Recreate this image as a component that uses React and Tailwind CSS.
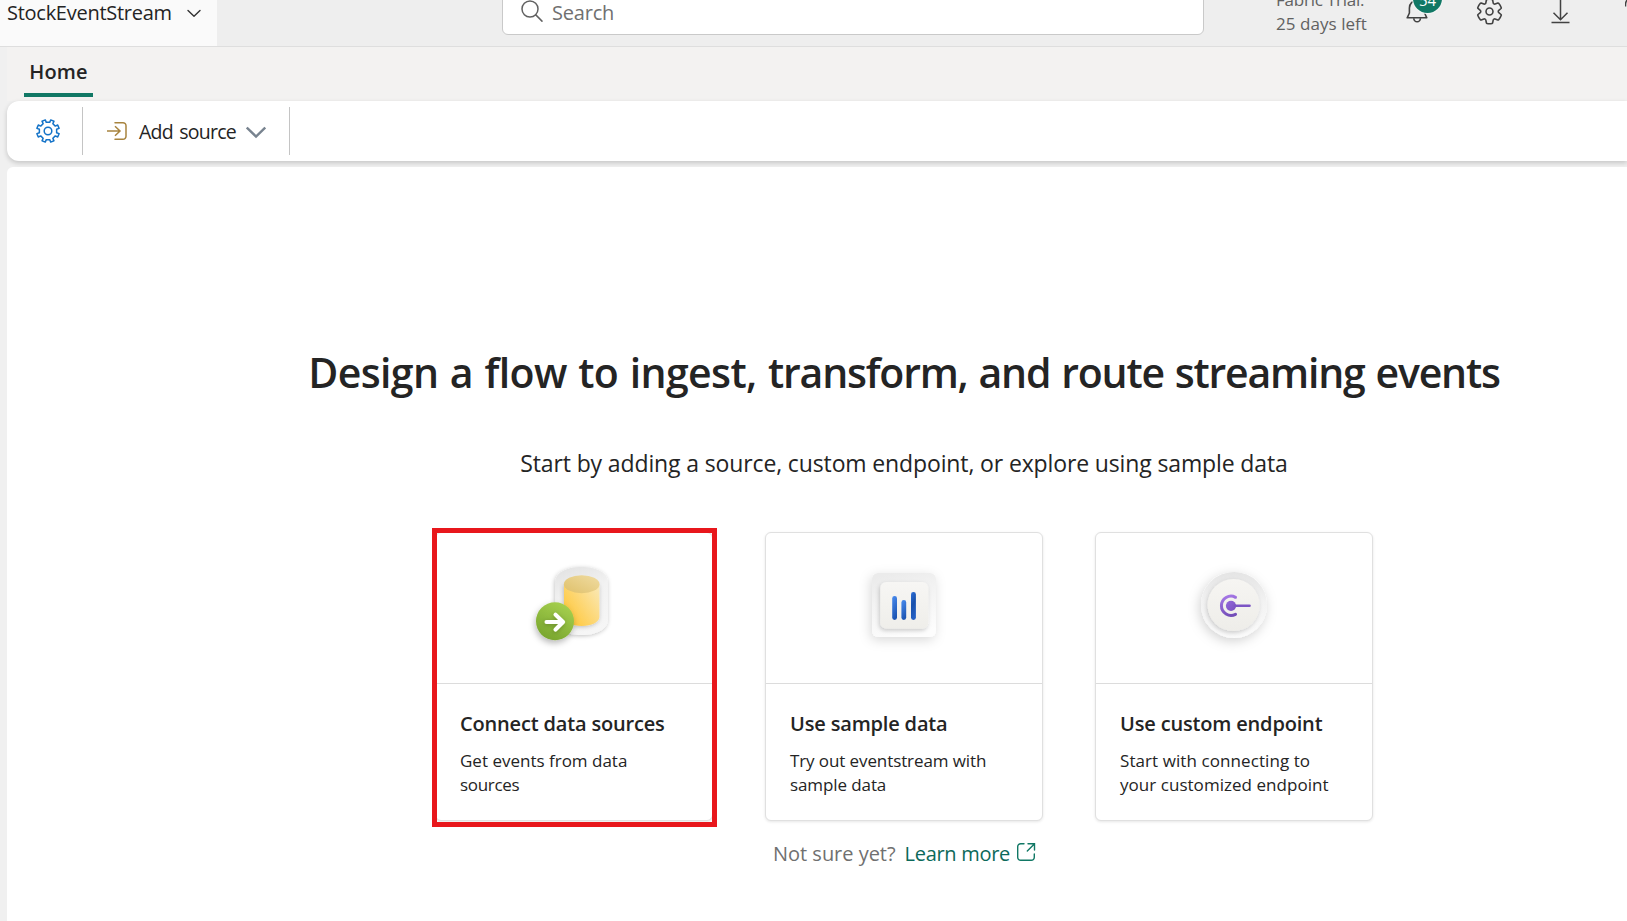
import React from "react";

const GEAR_SIX =
  "M1.91 7.38A8.5 8.5 0 0 1 3.7 4.3a.5.5 0 0 1 .54-.13l1.92.68a1 1 0 0 0 1.32-.76l.36-2a.5.5 0 0 1 .4-.4 8.53 8.53 0 0 1 3.55 0c.2.04.35.2.38.4l.37 2a1 1 0 0 0 1.32.76l1.92-.68a.5.5 0 0 1 .54.13 8.5 8.5 0 0 1 1.78 3.08c.06.2 0 .4-.15.54l-1.56 1.32a1 1 0 0 0 0 1.52l1.56 1.32a.5.5 0 0 1 .15.54 8.5 8.5 0 0 1-1.78 3.08.5.5 0 0 1-.54.13l-1.92-.68a1 1 0 0 0-1.32.76l-.37 2a.5.5 0 0 1-.38.4 8.53 8.53 0 0 1-3.56 0 .5.5 0 0 1-.39-.4l-.36-2a1 1 0 0 0-1.32-.76l-1.92.68a.5.5 0 0 1-.54-.13 8.5 8.5 0 0 1-1.78-3.08.5.5 0 0 1 .15-.54l1.56-1.32a1 1 0 0 0 0-1.52L2.06 7.92a.5.5 0 0 1-.15-.54Z";

function toothedPath(teeth, outer, inner, cx, cy) {
  const step = (Math.PI * 2) / teeth;
  const points = [];
  for (let i = 0; i < teeth; i++) {
    const a = -Math.PI / 2 + step / 2 + i * step;
    [
      [-0.25, inner],
      [-0.2, outer],
      [0.2, outer],
      [0.25, inner],
    ].forEach(([k, r]) => {
      points.push(`${(cx + r * Math.cos(a + k * step)).toFixed(2)} ${(cy + r * Math.sin(a + k * step)).toFixed(2)}`);
    });
  }
  return `M${points.join("L")}Z`;
}

function Header() {
  return (
    <header className="-mt-[22px] flex h-[69px] items-center border-b border-[#dedede] bg-[#eeeeee]">
      <div className="flex h-full w-[217px] shrink-0 items-center bg-[#fafafa] pl-[7px]">
        <span className="mt-px w-[164px] text-[20px] leading-[22px] tracking-[-0.27px] whitespace-nowrap text-[#242424]">
          StockEventStream
        </span>
        <svg className="mt-px ml-[15px] h-4 w-4" viewBox="0 0 16 16" fill="none" stroke="#333" strokeWidth="1.4">
          <path d="M2 5.4l6 5.800 6-5.800" strokeLinecap="round" strokeLinejoin="round" />
        </svg>
      </div>
      <div className="ml-[285px] flex h-[45px] w-[702px] shrink-0 items-center rounded-md border border-[#c9c9c9] bg-white pl-[18px]">
        <svg className="mb-[2px] h-6 w-6" viewBox="0 0 24 24" fill="none" stroke="#616161" strokeWidth="1.500">
          <circle cx="9" cy="10" r="8" />
          <path d="M14.800 15.900l6.200 6.200" strokeLinecap="round" />
        </svg>
        <span className="mt-px ml-[7px] text-[20px] leading-[22px] tracking-[-0.2px] text-[#707070]">Search</span>
      </div>
      <div className="ml-[72px] w-[94px] shrink-0 text-[17px] leading-[24px] whitespace-nowrap text-[#616161]">
        <div className="tracking-[-0.23px]">Fabric Trial:</div>
        <div className="tracking-[0.05px]">25 days left</div>
      </div>
      <div className="relative mt-px ml-[33px] h-7 w-7 shrink-0">
        <svg className="h-7 w-7" viewBox="0 0 28 28" fill="none" stroke="#424242" strokeWidth="1.600" strokeLinejoin="round">
          <path d="M14 1.500c-4.300 0-7.600 3.200-7.600 7.500v5L4.200 18.800h19.600L21.600 14V9c0-4.300-3.300-7.500-7.600-7.500z" />
          <path d="M10.800 19.200a3.300 3.600 0 0 0 6.600 0" />
        </svg>
        <span className="absolute top-[-15px] left-[10px] flex h-[29px] w-[29px] items-center justify-center rounded-full bg-[#117865] text-[15px] leading-[20px] text-white ring-1 ring-[#f4f4f4]">
          <span className="mt-[4px]">54</span>
        </span>
      </div>
      <svg className="mb-[2px] ml-[44px] h-[29px] w-[29px] shrink-0" viewBox="0 0 20 20" fill="none" stroke="#424242" strokeWidth="1.100">
        <path d={GEAR_SIX} />
        <circle cx="10" cy="10" r="2.400" />
      </svg>
      <svg className="ml-[42px] h-7 w-7 shrink-0" viewBox="0 0 28 28" fill="none" stroke="#424242" strokeWidth="1.500">
        <path d="M14.500 0v22M7.500 14.700l7 7 7-7M5.500 24.400h18" />
      </svg>
      <svg className="ml-[51px] h-7 w-7 shrink-0" viewBox="0 0 28 28" fill="none" stroke="#424242" strokeWidth="1.500">
        <path d="M.500 8.600V6.500C.500 2.500 4 -1 8-1s7 3 7 7c0 5-6.500 5.500-6.500 11M8.500 21v2" />
      </svg>
    </header>
  );
}

function Ribbon() {
  return (
    <div className="bg-[#f0f0f0] pl-[7px]">
      <nav className="flex h-[54px] bg-[#f3f2f1] pt-[10px] pl-[17px]">
        <div className="flex h-10 w-[69px] flex-col items-center border-b-4 border-[#117865] pt-px">
          <span className="text-[20px] leading-[28px] font-semibold tracking-[0.2px] text-[#242424]">Home</span>
        </div>
      </nav>
      <div className="bg-[#f0f0f0]">
        <div className="flex h-[60px] items-center rounded-l-xl bg-white pl-[29px] shadow-[0_2px_5px_rgba(0,0,0,0.18)]">
          <svg className="h-6 w-6" viewBox="0 0 24 24" fill="none" stroke="#1473c8" strokeWidth="1.500" strokeLinejoin="round">
            <path d={toothedPath(8, 11.4, 8.8, 12, 12)} />
            <circle cx="12" cy="12" r="3.800" />
          </svg>
          <div className="ml-[22px] h-12 w-px bg-[#c4c4c4]" />
          <svg className="ml-[24px] h-5 w-5" viewBox="0 0 20 20" fill="none" stroke="#a8843f" strokeWidth="1.500">
            <path d="M8 1.700h8a3 3 0 0 1 3 3v10.600a3 3 0 0 1-3 3H8" strokeLinecap="round" />
            <path d="M0 10h12.500M8 5.200l5 4.800-5 4.800" />
          </svg>
          <span className="mt-[2px] ml-[12px] w-[100px] text-[19.5px] leading-[28px] tracking-[-0.75px] [word-spacing:2px] whitespace-nowrap text-[#242424]">
            Add source
          </span>
          <svg className="mt-px ml-[7px] h-5 w-5" viewBox="0 0 20 20" fill="none" stroke="#78838f" strokeWidth="2.400">
            <path d="M0.800 5.500l9.200 9 9.200-9" />
          </svg>
          <div className="ml-[23px] h-12 w-px bg-[#c4c4c4]" />
        </div>
      </div>
    </div>
  );
}

function SourceArt() {
  return (
    <svg className="h-full w-full" viewBox="436 533 276 150">
      <defs>
        <linearGradient id="s-shell" x1="0.300" y1="0" x2="0.600" y2="1">
          <stop offset="0" stopColor="#e4e4e4" />
          <stop offset="0.400" stopColor="#f2f2f2" />
          <stop offset="1" stopColor="#f6f6f6" />
        </linearGradient>
        <linearGradient id="s-body" x1="0.100" y1="0.800" x2="1" y2="0.100">
          <stop offset="0" stopColor="#ffc83d" />
          <stop offset="1" stopColor="#fae8b4" />
        </linearGradient>
        <linearGradient id="s-top" x1="0" y1="1" x2="1" y2="0">
          <stop offset="0" stopColor="#dfc06a" />
          <stop offset="1" stopColor="#f0dca2" />
        </linearGradient>
        <linearGradient id="s-green" x1="0.200" y1="1" x2="0.700" y2="0">
          <stop offset="0" stopColor="#76a32c" />
          <stop offset="1" stopColor="#a6d04f" />
        </linearGradient>
        <filter id="s-shadow" x="-40%" y="-40%" width="180%" height="180%">
          <feDropShadow dx="-1" dy="3" stdDeviation="3.200" floodColor="#000" floodOpacity="0.280" />
        </filter>
        <filter id="s-soft" x="-40%" y="-40%" width="180%" height="180%">
          <feDropShadow dx="-0.500" dy="1" stdDeviation="2" floodColor="#000" floodOpacity="0.240" />
        </filter>
      </defs>
      <path
        d="M555 583c0-10 11-16 26.500-16S608 573 608 583v36c0 10-11 16-26.500 16S555 629 555 619z"
        fill="url(#s-shell)"
        filter="url(#s-soft)"
      />
      <path d="M564 584v33c0 5 8 9 17.700 9s17.700-4 17.700-9v-33z" fill="url(#s-body)" filter="url(#s-soft)" />
      <ellipse cx="581.700" cy="584.200" rx="17.800" ry="9" fill="url(#s-top)" />
      <circle cx="555" cy="621.300" r="19" fill="url(#s-green)" filter="url(#s-shadow)" />
      <path
        d="M546.500 622h16M555.500 614.600l7.600 7.400-7.600 7.600"
        fill="none"
        stroke="#fff"
        strokeWidth="4"
        strokeLinecap="round"
        strokeLinejoin="round"
        filter="url(#s-soft)"
      />
    </svg>
  );
}

function SampleArt() {
  return (
    <svg className="h-full w-full" viewBox="766 533 276 150">
      <defs>
        <linearGradient id="d-shell" x1="0.300" y1="0" x2="0.600" y2="1">
          <stop offset="0" stopColor="#ebebeb" />
          <stop offset="0.400" stopColor="#f3f3f3" />
          <stop offset="1" stopColor="#fdfdfd" />
        </linearGradient>
        <linearGradient id="d-plate" x1="0" y1="0" x2="0" y2="1">
          <stop offset="0" stopColor="#f7f6f4" />
          <stop offset="1" stopColor="#efeeea" />
        </linearGradient>
        <linearGradient id="d-bar" x1="0" y1="0" x2="0.300" y2="1">
          <stop offset="0" stopColor="#4a8cf0" />
          <stop offset="1" stopColor="#1d56b4" />
        </linearGradient>
        <linearGradient id="d-bar-dark" x1="0" y1="0" x2="0.300" y2="1">
          <stop offset="0" stopColor="#2f6fd8" />
          <stop offset="0.500" stopColor="#1850ab" />
          <stop offset="1" stopColor="#2560c4" />
        </linearGradient>
        <filter id="d-shadow" x="-50%" y="-50%" width="200%" height="200%">
          <feDropShadow dx="-1.500" dy="3" stdDeviation="6" floodColor="#000" floodOpacity="0.150" />
        </filter>
        <filter id="d-soft" x="-40%" y="-40%" width="180%" height="180%">
          <feDropShadow dx="-1" dy="2" stdDeviation="2.200" floodColor="#000" floodOpacity="0.200" />
        </filter>
      </defs>
      <rect x="872" y="573" width="64" height="64" rx="6" fill="url(#d-shell)" filter="url(#d-shadow)" />
      <rect x="880.300" y="582" width="48" height="46.500" rx="6" fill="url(#d-plate)" filter="url(#d-soft)" />
      <g fill="url(#d-bar)">
        <rect x="892.200" y="596" width="4.800" height="24" rx="2.400" />
        <rect x="901.400" y="600" width="4.800" height="20" rx="2.400" />
      </g>
      <rect x="911" y="592" width="4.900" height="28" rx="2.400" fill="url(#d-bar-dark)" />
    </svg>
  );
}

function EndpointArt() {
  return (
    <svg className="h-full w-full" viewBox="1096 533 276 150">
      <defs>
        <linearGradient id="e-shell" x1="0.500" y1="0" x2="0.500" y2="1">
          <stop offset="0" stopColor="#e4e4e4" />
          <stop offset="0.450" stopColor="#f2f2f2" />
          <stop offset="1" stopColor="#fbfbfb" />
        </linearGradient>
        <linearGradient id="e-plate" x1="0" y1="0" x2="0" y2="1">
          <stop offset="0" stopColor="#f6f5f2" />
          <stop offset="1" stopColor="#eeede9" />
        </linearGradient>
        <linearGradient id="e-ring" gradientUnits="userSpaceOnUse" x1="1228" y1="595" x2="1234" y2="617">
          <stop offset="0" stopColor="#a678e6" />
          <stop offset="1" stopColor="#6f4ab4" />
        </linearGradient>
        <linearGradient id="e-dot" x1="0" y1="0" x2="1" y2="1">
          <stop offset="0" stopColor="#9468dc" />
          <stop offset="1" stopColor="#7850be" />
        </linearGradient>
        <filter id="e-shadow" x="-50%" y="-50%" width="200%" height="200%">
          <feDropShadow dx="-1.500" dy="3" stdDeviation="6" floodColor="#000" floodOpacity="0.180" />
        </filter>
        <filter id="e-soft" x="-40%" y="-40%" width="180%" height="180%">
          <feDropShadow dx="-1" dy="2" stdDeviation="2.200" floodColor="#000" floodOpacity="0.180" />
        </filter>
      </defs>
      <circle cx="1234" cy="605" r="33" fill="url(#e-shell)" filter="url(#e-shadow)" />
      <circle cx="1233.600" cy="605" r="26" fill="url(#e-plate)" filter="url(#e-soft)" />
      <path
        d="M1235.500 597.300A9.600 9.600 0 1 0 1235.500 614.300"
        fill="none"
        stroke="url(#e-ring)"
        strokeWidth="3"
        strokeLinecap="round"
      />
      <circle cx="1231" cy="605.800" r="5.100" fill="url(#e-dot)" />
      <path d="M1235 605.700h14.500" stroke="#7c55c4" strokeWidth="2.600" strokeLinecap="round" />
    </svg>
  );
}

function Card({ art, title, children, selected }) {
  return (
    <article className="relative h-[289px] w-[278px] rounded-md border border-[#e0e0e0] bg-white shadow-[0_1px_3px_rgba(0,0,0,0.1)]">
      <div className="h-[151px] border-b border-[#dcdcdc]">{art}</div>
      <div className="pt-[26px] pl-[24px]">
        <h2 className="text-[20px] leading-[28px] font-semibold tracking-[-0.17px] whitespace-nowrap text-[#242424]">
          {title}
        </h2>
        <p className="mt-[11px] text-[17px] leading-[24px] whitespace-nowrap text-[#242424]">{children}</p>
      </div>
      {selected && <div className="absolute -top-[5px] -left-[4px] h-[299px] w-[285px] border-5 border-[#e8171c]" />}
    </article>
  );
}

export default function App() {
  return (
    <div className="h-[921px] w-full overflow-hidden bg-[#f0f0f0] font-['Open_Sans',sans-serif]">
      <Header />
      <Ribbon />
      <main className="mt-[6px] ml-[7px] flex h-[754px] w-[1794px] flex-col items-center rounded-tl-md bg-white pt-[177px]">
        <h1 className="text-[41px] leading-[56px] font-semibold [word-spacing:1.5px] whitespace-nowrap text-[#242424]">
          <span className="tracking-[-0.63px]">Design a flow to ingest, </span>
          <span className="tracking-[-1.2px]">transform, and route streaming events</span>
        </h1>
        <p className="mt-[47px] text-[23px] leading-[32px] tracking-[-0.13px] whitespace-nowrap text-[#242424]">
          Start by adding a source, custom endpoint, or explore using sample data
        </p>
        <div className="mt-[53px] flex gap-[52px]">
          <Card art={<SourceArt />} title="Connect data sources" selected>
            Get events from data
            <br />
            <span className="tracking-[-0.3px]">sources</span>
          </Card>
          <Card art={<SampleArt />} title="Use sample data">
            <span className="tracking-[-0.1px]">
              Try out eventstream with
              <br />
              sample data
            </span>
          </Card>
          <Card art={<EndpointArt />} title="Use custom endpoint">
            <span className="tracking-[0.08px]">Start with connecting to</span>
            <br />
            <span className="tracking-[0.04px]">your customized endpoint</span>
          </Card>
        </div>
        <div className="mt-[19px] flex items-center pl-px text-[20px] leading-[28px]">
          <span className="tracking-[-0.02px] text-[#707070]">Not sure yet?</span>
          <a className="ml-[9px] flex items-center gap-[6px] tracking-[-0.3px] text-[#0c695a]">
            Learn more
            <svg className="mb-[4px] h-5 w-5" viewBox="0 0 20 20" fill="none" stroke="#117865" strokeWidth="1.400">
              <path
                d="M8 1.700H4.700a3 3 0 0 0-3 3v10.600a3 3 0 0 0 3 3h10.600a3 3 0 0 0 3-3V12M12 1.700h6.500V8M18.300 1.900l-7 7"
                strokeLinecap="round"
              />
            </svg>
          </a>
        </div>
      </main>
    </div>
  );
}
